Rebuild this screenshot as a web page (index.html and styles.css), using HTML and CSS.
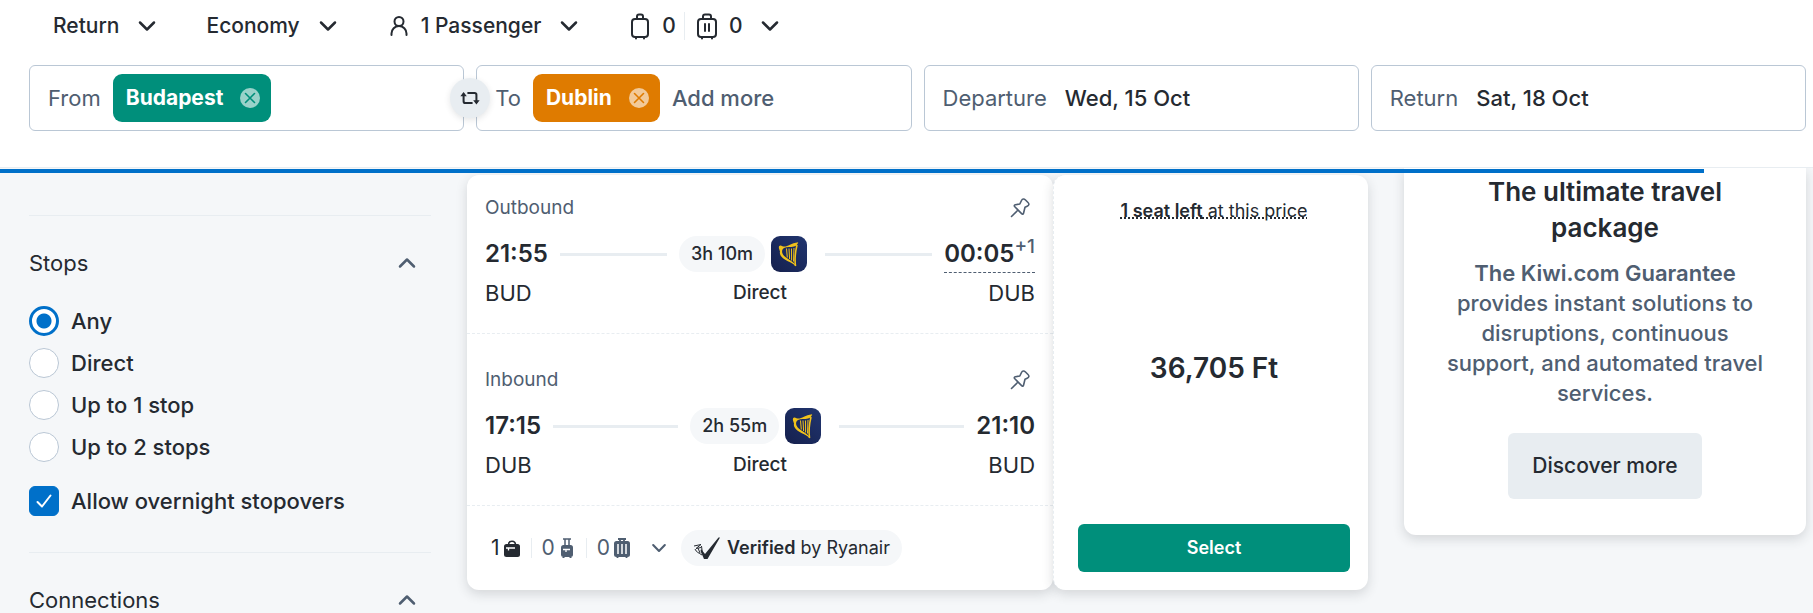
FILE: index.html
```html
<!DOCTYPE html>
<html lang="en">
  <head>
    <meta charset="utf-8">
    <title>Budapest to Dublin</title>
    <link rel="stylesheet" href="styles.css">
  </head>
  <body>
    <svg class="sprite" aria-hidden="true">
      <symbol id="chevron" viewBox="0 0 24 24">
        <path d="M5 8.500l7 7 7-7" fill="none" stroke="currentColor" stroke-width="2.500" stroke-linecap="round" stroke-linejoin="round"/>
      </symbol>
      <symbol id="close" viewBox="0 0 20 20">
        <circle cx="10" cy="10" r="10" fill="#fff" opacity=".6"/>
        <path d="M5.500 5.500l9 9M14.500 5.500l-9 9" stroke="currentColor" stroke-width="1.600" stroke-linecap="round"/>
      </symbol>
      <symbol id="pin" viewBox="0 0 24 24">
        <path d="M3.500 20.500l6-6M13.500 4.500c1-2 2.500-2 4-.5l2.500 2.500c1.500 1.500 1 3-.8 3.700l-2.200 1-1.400 5.800c-.3 1.300-1.200 1.500-2 .6l-6.800-6.800c-.9-.9-.7-1.700.5-2l4.500-.8z" fill="none" stroke="currentColor" stroke-width="1.600" stroke-linecap="round" stroke-linejoin="round"/>
      </symbol>
      <symbol id="harp" viewBox="0 0 36 36">
        <path d="M8 12.500c-.5-2 .3-3.200 1.800-3l1.700.8c4.500 1.500 7.500-3 15.700-4-.5 2.200-2 3.600-4.200 4.300-3.500 1-7-.1-10 1.500-3 2-2.200 5.500.5 8.200 3 3 8.500 5 10.500 8.200l1.200 2.300c-3.500-4.300-9.500-5.600-13.200-8.600C9 19.500 8.500 17.500 9 15.500z" fill="#f1c21b"/>
        <path d="M15.500 12.500l.8 9M18 12.500l.6 10.500M20.500 12.500l.1 12M23 12l-.5 13.500" stroke="#f1c21b" stroke-width="1"/>
        <path d="M26 9c-1.500 6-2.600 13-1.500 21" fill="none" stroke="#f1c21b" stroke-width="1.600"/>
      </symbol>
    </svg>

    <header class="search">
      <div class="options">
        <label class="option">
          <select aria-label="Trip type">
            <option>Return</option>
            <option>One-way</option>
          </select>
          <svg class="icon"><use href="#chevron"/></svg>
        </label>
        <label class="option">
          <select aria-label="Cabin class">
            <option>Economy</option>
            <option>Business</option>
          </select>
          <svg class="icon"><use href="#chevron"/></svg>
        </label>
        <button class="option" type="button">
          <span class="count">
            <svg class="icon" viewBox="0 0 24 24" fill="none" stroke="currentColor" stroke-width="2" stroke-linecap="round">
              <circle cx="12" cy="7.500" r="4.500"/>
              <path d="M4.500 21v-1.500a7.500 7.500 0 0 1 15 0V21"/>
            </svg>
            1 Passenger
          </span>
          <svg class="icon"><use href="#chevron"/></svg>
        </button>
        <button class="option" type="button" aria-label="Bags">
          <span class="bags">
            <span class="count">
              <svg class="icon icon-bag" viewBox="0 0 24 28" fill="none" stroke="currentColor" stroke-width="2" stroke-linecap="round">
                <rect x="4" y="7" width="16" height="18" rx="3"/>
                <path d="M9 7V4.500a2 2 0 0 1 2-2h2a2 2 0 0 1 2 2V7M8 26v.5M16 26v.5"/>
              </svg>
              0
            </span>
            <span class="count">
              <svg class="icon icon-bag" viewBox="0 0 24 28" fill="none" stroke="currentColor" stroke-width="2" stroke-linecap="round">
                <rect x="3" y="7" width="18" height="18" rx="3"/>
                <path d="M8 7V4.500a2 2 0 0 1 2-2h4a2 2 0 0 1 2 2V7M10 12v7M14 12v7M7 26v.5M17 26v.5"/>
              </svg>
              0
            </span>
          </span>
          <svg class="icon"><use href="#chevron"/></svg>
        </button>
      </div>

      <form class="fields">
        <div class="field">
          <label for="from">From</label>
          <span class="tag tag-from">Budapest
            <button type="button" aria-label="Remove Budapest"><svg><use href="#close"/></svg></button>
          </span>
          <input id="from" type="text">
          <button class="swap" type="button" aria-label="Swap places">
            <svg viewBox="0 0 24 24">
              <path d="M5 8v7.500a2 2 0 0 0 2 2h7M10 6.500h7a2 2 0 0 1 2 2V16" fill="none" stroke="currentColor" stroke-width="2.200" stroke-linecap="round"/>
              <path d="M1.500 10L5 5.500 8.500 10zM15.500 14.500h7L19 19z" fill="currentColor"/>
            </svg>
          </button>
        </div>
        <div class="field">
          <label for="to">To</label>
          <span class="tag tag-to">Dublin
            <button type="button" aria-label="Remove Dublin"><svg><use href="#close"/></svg></button>
          </span>
          <input id="to" type="text" placeholder="Add more">
        </div>
        <div class="field field-date">
          <label for="departure">Departure</label>
          <input id="departure" type="text" value="Wed, 15 Oct">
        </div>
        <div class="field field-date">
          <label for="return">Return</label>
          <input id="return" type="text" value="Sat, 18 Oct">
        </div>
      </form>
      <div class="progress"></div>
    </header>

    <main class="page">
      <aside class="filters">
        <section class="filter">
          <h2><button type="button">Stops <svg class="icon icon-up"><use href="#chevron"/></svg></button></h2>
          <div class="choices">
            <label><input type="radio" name="stops" checked>Any</label>
            <label><input type="radio" name="stops">Direct</label>
            <label><input type="radio" name="stops">Up to 1 stop</label>
            <label><input type="radio" name="stops">Up to 2 stops</label>
          </div>
          <div class="choices">
            <label>
              <span class="check">
                <input type="checkbox" checked>
                <svg viewBox="0 0 30 30"><path d="M8.500 16l4.500 4.500 8.500-11" fill="none" stroke="#fff" stroke-width="2" stroke-linecap="round" stroke-linejoin="round"/></svg>
              </span>
              Allow overnight stopovers
            </label>
          </div>
        </section>
        <section class="filter filter-last">
          <h2><button type="button">Connections <svg class="icon icon-up"><use href="#chevron"/></svg></button></h2>
        </section>
      </aside>

      <article class="result">
        <div class="trip">
          <section class="leg">
            <div class="leg-title">
              Outbound
              <button type="button" aria-label="Pin outbound"><svg><use href="#pin"/></svg></button>
            </div>
            <div class="leg-times">
              <time>21:55</time>
              <span class="line"></span>
              <span class="pill">3h 10m</span>
              <svg class="carrier" role="img" aria-label="Ryanair"><use href="#harp"/></svg>
              <span class="line"></span>
              <time class="next-day">00:05<sup>+1</sup></time>
            </div>
            <div class="leg-places">
              <span>BUD</span>
              <b>Direct</b>
              <span>DUB</span>
            </div>
          </section>
          <section class="leg">
            <div class="leg-title">
              Inbound
              <button type="button" aria-label="Pin inbound"><svg><use href="#pin"/></svg></button>
            </div>
            <div class="leg-times">
              <time>17:15</time>
              <span class="line"></span>
              <span class="pill">2h 55m</span>
              <svg class="carrier" role="img" aria-label="Ryanair"><use href="#harp"/></svg>
              <span class="line"></span>
              <time>21:10</time>
            </div>
            <div class="leg-places">
              <span>DUB</span>
              <b>Direct</b>
              <span>BUD</span>
            </div>
          </section>
          <footer class="trip-footer">
            <button class="luggage" type="button">
              <span class="has-bag">1
                <svg viewBox="0 0 18 20">
                  <path d="M5.500 7c0-5 7-5 7 0" fill="none" stroke="currentColor" stroke-width="1.600"/>
                  <rect x="1" y="6" width="16" height="13" rx="2.500" fill="currentColor"/>
                  <path d="M3 10h9M5.500 10v2.500" stroke="#fff" stroke-width="1.300"/>
                </svg>
              </span>
              <span>0
                <svg viewBox="0 0 18 20">
                  <path d="M5 1h8M7 1v7M11 1v7" stroke="currentColor" stroke-width="1.500"/>
                  <rect x="3" y="7" width="12" height="12" rx="2.500" fill="currentColor"/>
                  <path d="M5 11.500h7M8 11.500V14" stroke="#fff" stroke-width="1.300"/>
                  <path d="M5.500 19v1M12.500 19v1" stroke="currentColor" stroke-width="2"/>
                </svg>
              </span>
              <span>0
                <svg viewBox="0 0 18 20">
                  <path d="M5 1h8M7 1v3M11 1v3M4.500 19v1M13.500 19v1" stroke="currentColor" stroke-width="1.800"/>
                  <rect x="1" y="3" width="16" height="16" rx="2.500" fill="currentColor"/>
                  <path d="M5 6v10M9 6v10M13 6v10" stroke="#fff" stroke-width="1.500"/>
                </svg>
              </span>
              <svg class="icon"><use href="#chevron"/></svg>
            </button>
            <span class="pill verified">
              <svg viewBox="0 0 28 24">
                <path d="M8 13l4 5L25.500 1.500h1.500L14.500 23h-3.500L7.500 15z" fill="currentColor"/>
                <path d="M1 10l7-1.500-5 4 5-1M2 13c1 3 4 4 7 6M5 12l2 5M8.500 10l1 8" fill="none" stroke="currentColor" stroke-width="1"/>
              </svg>
              <span><b>Verified</b> by Ryanair</span>
            </span>
          </footer>
        </div>
        <div class="price">
          <p class="seats"><b>1 seat left</b> at this price</p>
          <strong>36,705 Ft</strong>
          <button type="button">Select</button>
        </div>
      </article>

      <aside class="banner">
        <h2>The ultimate travel package</h2>
        <p><b>The Kiwi.com Guarantee</b> provides instant solutions to disruptions, continuous support, and automated travel services.</p>
        <button type="button">Discover more</button>
      </aside>
    </main>
  </body>
</html>
```
FILE: styles.css
```css
:root {
  --fonts: Inter, Roboto, "Liberation Sans", sans-serif;
  --ink: #252a31;
  --ink-light: #4f5e71;
  --cloud: #f5f7f9;
  --cloud-dark: #e8edf1;
  --border: #bac7d5;
  --blue: #0070c9;
  --green: #008f7b;
  --orange: #df7b00;
  --radius: 6px;
  --card-radius: 12px;
  --card-shadow: 0 4px 12px rgba(37, 42, 49, 0.16);
}

* {
  box-sizing: border-box;
}

body {
  margin: 0;
  background: var(--cloud);
  color: var(--ink);
  font-family: var(--fonts);
  font-size: 22px;
  line-height: 30px;
}

h2,
p {
  margin: 0;
}

b {
  font-weight: 600;
}

button,
input,
select {
  margin: 0;
  padding: 0;
  border: 0;
  background: none;
  color: inherit;
  font: inherit;
}

button,
select {
  cursor: pointer;
}

svg {
  display: block;
  flex: none;
}

.sprite {
  position: absolute;
  width: 0;
  height: 0;
}

.icon {
  width: 24px;
  height: 24px;
}

.icon-bag {
  height: 28px;
}

.icon-up {
  transform: rotate(180deg);
}

/* search bar */

.search {
  position: relative;
  padding: 0 7px 36px 29px;
  border-bottom: 1px solid var(--cloud-dark);
  background: #fff;
}

.options {
  display: flex;
  gap: 47px;
  height: 44px;
  padding-left: 24px;
  margin-bottom: 21px;
  font-size: 21px;
  font-weight: 500;
}

.option {
  display: flex;
  align-items: center;
  gap: 16px;
  padding-top: 8px;
}

.option select {
  appearance: none;
  field-sizing: content;
}

.bags {
  display: flex;
  align-items: center;
}

.count {
  display: flex;
  align-items: center;
  gap: 10px;
}

.bags .count + .count {
  margin-left: 8px;
  padding-left: 10px;
  border-left: 1px solid var(--cloud-dark);
  line-height: 20px;
}

.fields {
  display: grid;
  grid-template-columns: repeat(4, minmax(0, 1fr));
  gap: 12px;
}

.field {
  position: relative;
  display: flex;
  align-items: center;
  gap: 12px;
  height: 66px;
  padding: 0 18px;
  border: 1px solid var(--border);
  border-radius: var(--radius);
}

.field-date {
  gap: 18px;
}

.field label {
  color: var(--ink-light);
}

.field input {
  flex: 1;
  min-width: 0;
  outline: 0;
  font-weight: 500;
}

.field input::placeholder {
  color: var(--ink-light);
  opacity: 1;
}

.tag {
  display: flex;
  align-items: center;
  gap: 17px;
  height: 48px;
  padding: 0 11px 0 13px;
  border-radius: 9px;
  color: #fff;
  font-size: 21px;
  font-weight: 700;
}

.tag svg {
  width: 20px;
  height: 20px;
}

.tag-from {
  background: var(--green);
}

.tag-from button {
  color: var(--green);
}

.tag-to {
  background: var(--orange);
}

.tag-to button {
  color: var(--orange);
}

.swap {
  position: absolute;
  z-index: 1;
  right: -27px;
  display: flex;
  align-items: center;
  justify-content: center;
  width: 40px;
  height: 40px;
  border-radius: 50%;
  background: var(--cloud-dark);
  box-shadow: 0 2px 6px rgba(37, 42, 49, 0.12);
}

.swap svg {
  width: 22px;
  height: 22px;
}

.progress {
  position: absolute;
  top: calc(100% + 2px);
  left: 0;
  width: 94%;
  height: 4px;
  background: var(--blue);
}

/* page columns */

.page {
  display: grid;
  grid-template-columns: 402px 1fr 402px;
  align-items: start;
  gap: 36px;
  padding: 0 7px 0 29px;
}

/* filters */

.filters {
  padding-top: 47px;
}

.filter {
  padding: 32px 0 36px;
  border-top: 1px solid var(--cloud-dark);
}

.filter-last {
  padding-bottom: 0;
}

.filter h2 {
  font-size: 22px;
  font-weight: 400;
}

.filter h2 button {
  display: flex;
  align-items: center;
  justify-content: space-between;
  width: 100%;
  padding-right: 12px;
}

.filter h2 svg {
  color: var(--ink-light);
}

.choices {
  display: flex;
  flex-direction: column;
  gap: 12px;
  margin-top: 28px;
  font-weight: 500;
}

.choices + .choices {
  margin-top: 24px;
}

.choices label {
  display: flex;
  align-items: center;
  gap: 12px;
}

.choices input {
  appearance: none;
  display: block;
  width: 30px;
  height: 30px;
  border: 1px solid var(--border);
  border-radius: 50%;
  background: #fff;
}

.choices input[type="radio"]:checked {
  border: 3px solid var(--blue);
  background: radial-gradient(circle, var(--blue) 7px, #fff 8px);
}

.check {
  position: relative;
}

.check input {
  border-radius: var(--radius);
}

.check input:checked {
  border-color: var(--blue);
  background: var(--blue);
}

.check svg {
  position: absolute;
  inset: 0;
}

/* result card */

.result {
  display: grid;
  grid-template-columns: 1fr 315px;
  margin-top: 7px;
  font-size: 18px;
}

.trip,
.price {
  border-radius: var(--card-radius);
  background: #fff;
  box-shadow: var(--card-shadow);
}

.leg {
  padding: 34px 18px 25px;
  border-bottom: 1px dashed var(--cloud-dark);
}

.leg:first-child {
  padding-top: 21px;
}

.leg-title,
.leg-times,
.leg-places {
  display: flex;
  align-items: center;
  justify-content: space-between;
}

.leg-title {
  height: 24px;
  padding-right: 3px;
  color: var(--ink-light);
  font-size: 19px;
}

.leg-title svg {
  width: 24px;
  height: 24px;
}

.leg-times {
  gap: 12px;
  height: 36px;
  margin: 16px 0 6px;
}

.leg-times time {
  font-size: 24px;
  font-weight: 600;
}

.leg-times .line {
  flex: 1;
  height: 3px;
  background: var(--cloud-dark);
}

.next-day {
  border-bottom: 1px dashed var(--ink-light);
  line-height: 36px;
}

.next-day sup {
  color: var(--ink-light);
  font-size: 19px;
  font-weight: 500;
  line-height: 18px;
}

.pill {
  height: 36px;
  padding: 0 12px;
  border-radius: 18px;
  background: var(--cloud);
  font-weight: 500;
  line-height: 36px;
}

.carrier {
  width: 36px;
  height: 36px;
  margin: 0 6px 0 -6px;
  border-radius: 9px;
  background: linear-gradient(45deg, #15204d, #21356f);
}

.leg-places {
  font-size: 22px;
}

.leg-places span {
  flex: 1;
}

.leg-places span:last-child {
  text-align: right;
}

.leg-places b {
  font-size: 19px;
  font-weight: 500;
}

.trip-footer {
  display: flex;
  align-items: center;
  gap: 12px;
  height: 84px;
  padding: 0 24px;
}

.luggage {
  display: flex;
  align-items: center;
  color: var(--ink-light);
  font-size: 21px;
  line-height: 20px;
}

.luggage span {
  display: flex;
  align-items: center;
  gap: 3px;
  padding-right: 10px;
}

.luggage .has-bag {
  color: var(--ink);
}

.luggage span + span {
  padding-left: 10px;
  border-left: 1px solid var(--cloud-dark);
}

.luggage span svg {
  width: 18px;
  height: 20px;
}

.luggage .icon {
  width: 20px;
  height: 20px;
  margin-left: 8px;
}

.verified {
  display: flex;
  align-items: center;
  gap: 6px;
  font-weight: 400;
}

.verified svg {
  width: 28px;
  height: 24px;
}

.price {
  display: flex;
  flex-direction: column;
  align-items: center;
  justify-content: space-between;
  padding: 24px 18px 18px 24px;
  border-left: 1px dashed var(--cloud-dark);
}

.seats {
  line-height: 24px;
  text-decoration: underline dotted;
}

.price strong {
  margin-bottom: 12px;
  font-size: 28px;
  font-weight: 600;
}

.price button {
  width: 100%;
  height: 48px;
  border-radius: var(--radius);
  background: var(--green);
  color: #fff;
  font-weight: 600;
}

/* guarantee banner */

.banner {
  display: flex;
  flex-direction: column;
  align-items: center;
  padding: 6px 36px 36px;
  border-radius: 0 0 var(--card-radius) var(--card-radius);
  background: #fff;
  box-shadow: var(--card-shadow);
  text-align: center;
}

.banner h2 {
  margin-bottom: 12px;
  font-size: 26px;
  font-weight: 600;
  line-height: 36px;
}

.banner p {
  margin-bottom: 25px;
  color: var(--ink-light);
  font-weight: 500;
}

.banner button {
  height: 66px;
  padding: 0 24px;
  border-radius: var(--radius);
  background: var(--cloud-dark);
  font-size: 21px;
  font-weight: 500;
}
```
